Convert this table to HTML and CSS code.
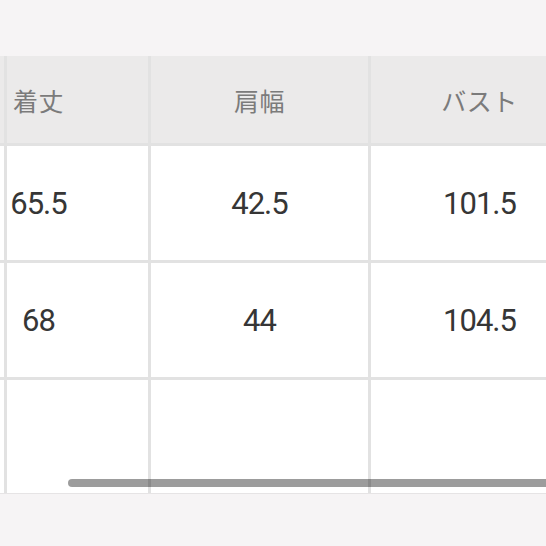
FILE: index.html
```html
<!DOCTYPE html>
<html lang="ja">
<head>
<meta charset="utf-8">
<title>サイズ表</title>
<link rel="stylesheet" href="styles.css">
</head>
<body>
<div class="top-band"></div>
<div class="table-wrap">
  <div class="size-grid">
    <div class="cell head edge"></div>
    <div class="cell head first">着丈</div>
    <div class="cell head">肩幅</div>
    <div class="cell head">バスト</div>

    <div class="cell edge"></div>
    <div class="cell num first">65.5</div>
    <div class="cell num">42.5</div>
    <div class="cell num">101.5</div>

    <div class="cell edge"></div>
    <div class="cell num first">68</div>
    <div class="cell num">44</div>
    <div class="cell num">104.5</div>

    <div class="cell edge"></div>
    <div class="cell num first"></div>
    <div class="cell num"></div>
    <div class="cell num"></div>
  </div>
  <div class="scrollbar"></div>
</div>
<div class="bottom-band"></div>
</body>
</html>
```
FILE: styles.css
```css
html, body {
  margin: 0;
  padding: 0;
}
body {
  background: #f6f4f5;
  width: 546px;
  height: 546px;
  overflow: hidden;
  font-family: Roboto, "Noto Sans CJK JP", sans-serif;
}
.top-band {
  height: 56px;
  background: #f6f4f5;
}
.table-wrap {
  position: relative;
  width: 546px;
  overflow: hidden;
  border-bottom: 1px solid #e6e4e5;
}
.size-grid {
  display: grid;
  grid-template-columns: 4px 141px 217px 217px;
  grid-template-rows: 87px 114px 114px 113px;
  gap: 3px;
  width: 588px;
  background: #e2e2e2;
}
.cell {
  display: flex;
  align-items: center;
  justify-content: center;
  background: #ffffff;
}
.cell.head {
  background: #ebeaea;
  font-family: "Noto Sans CJK JP", sans-serif;
  font-size: 25px;
  color: #7b7b7b;
  letter-spacing: 0.5px;
}
.cell.first {
  padding-right: 78px;
}
.cell.num {
  font-family: Roboto, sans-serif;
  font-size: 31px;
  color: #363636;
  letter-spacing: -1px;
}
.scrollbar {
  position: absolute;
  left: 68px;
  right: -10px;
  bottom: 6px;
  height: 8px;
  border-radius: 4px;
  background: rgba(0, 0, 0, 0.39);
}
.bottom-band {
  height: 52px;
  background: #f6f4f5;
}
```
